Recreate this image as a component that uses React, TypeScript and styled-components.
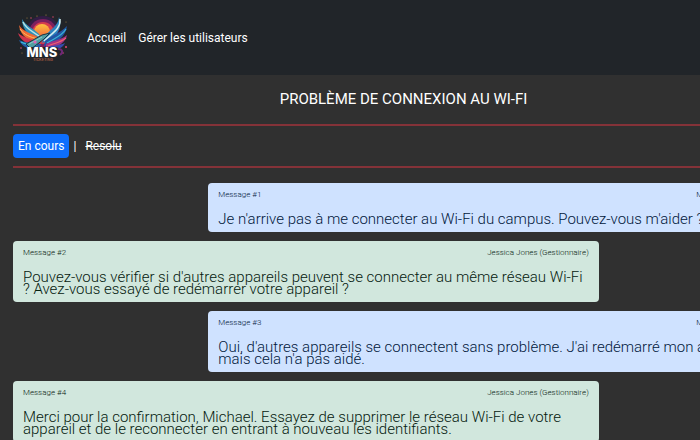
import React from "react";
import styled, { createGlobalStyle, css } from "styled-components";

const GlobalStyle = createGlobalStyle`
  *, *::before, *::after { box-sizing: border-box; }
  html { overflow: hidden; background: #303030; }
  body {
    margin: 0;
    background: #303030;
    color: #fff;
    font-family: Roboto, "Liberation Sans", sans-serif;
    font-size: 12px;
    line-height: 20px;
  }
`;

const Page = styled.div`
  min-width: 807px;
`;

const NavBar = styled.nav`
  display: flex;
  align-items: center;
  gap: 14px;
  height: 75px;
  padding: 0 13px;
  background: #212529;
`;

const LogoLink = styled.a`
  display: block;
  width: 60px;
  height: 60px;
`;

const NavLinks = styled.ul`
  display: flex;
  gap: 12px;
  margin: 0;
  padding: 0;
  list-style: none;
`;

const NavLink = styled.a`
  color: #fff;
  text-decoration: none;
`;

const Main = styled.main`
  padding: 14px 13px;
`;

const Title = styled.h1`
  margin: 0 0 15px;
  font-size: 15px;
  font-weight: 400;
  line-height: 20px;
  text-align: center;
  text-transform: uppercase;
`;

const StatusBar = styled.div`
  display: flex;
  align-items: center;
  gap: 4px;
  padding: 8px 0;
  border: solid #843238;
  border-width: 2px 0;
`;

const StatusButton = styled.button<{ $active?: boolean }>`
  padding: 2px 5px;
  border: 0;
  border-radius: 4px;
  background: transparent;
  color: #fff;
  font: inherit;
  text-decoration: line-through;
  cursor: pointer;
  ${({ $active }) =>
    $active &&
    css`
      background: #0d6efd;
      text-decoration: none;
    `}
`;

const Thread = styled.section`
  display: flex;
  flex-direction: column;
  gap: 9px;
  margin-top: 15px;
`;

const Card = styled.article<{ $own?: boolean }>`
  width: 75%;
  align-self: ${({ $own }) => ($own ? "flex-end" : "flex-start")};
  padding: 7px 10px;
  border-radius: 4px;
  background: ${({ $own }) => ($own ? "#cfe2ff" : "#d1e7dd")};
  color: ${({ $own }) => ($own ? "#02183c" : "#05200f")};
`;

const CardHeader = styled.header`
  display: flex;
  justify-content: space-between;
  margin-bottom: 13px;
  font-size: 8px;
  font-weight: 300;
  line-height: 10px;
`;

const CardText = styled.p`
  margin: 0;
  font-size: 15px;
  font-weight: 300;
  line-height: 12px;
`;

function Logo() {
  return (
    <svg viewBox="0 0 60 60" width="60" height="60" role="img" aria-label="MNS Ticketing">
      <defs>
        <linearGradient id="sun" x2="0" y2="1">
          <stop stopColor="#ffc23f" />
          <stop offset="1" stopColor="#f2543c" />
        </linearGradient>
      </defs>
      <circle cx="30" cy="25" r="17" fill="#321d45" />
      <circle cx="30" cy="25" r="14" fill="#7d205f" />
      <circle cx="30" cy="25" r="11" fill="#d63c4e" />
      <circle cx="29" cy="24" r="8" fill="url(#sun)" />

      <path d="M28 32C18 30 9 23 9 11C13 18 20 20 26 26Z" fill="#2f8fb8" />
      <path d="M10 14C13 21 19 23 26 28" fill="none" stroke="#b9e5e4" strokeWidth="1.4" />
      <path d="M28 36C17 35 7 28 6 17C10 24 18 25 27 30Z" fill="#ef6a35" />
      <path d="M7 21C11 27 17 29 25 31" fill="none" stroke="#ffc05d" strokeWidth="1" />
      <path d="M27 38C16 39 7 32 5 25C11 30 18 31 28 34Z" fill="#cf344d" />
      <path d="M26 41C17 43 8 38 6 32C12 35 19 35 28 36Z" fill="#245ca8" />
      <path d="M8 34C13 37 18 37 24 37" fill="none" stroke="#3ec2d3" strokeWidth="1.2" />

      <path d="M29 35C40 32 51 23 46 9C45 19 37 21 31 29Z" fill="#2c82bf" />
      <path d="M47 11C48 21 39 25 31 33" fill="none" stroke="#d4eef0" strokeWidth="1.5" />
      <path d="M31 38C44 36 53 28 54 18C48 25 40 26 32 33Z" fill="#2255a5" />
      <path d="M53 21C49 28 42 30 34 35" fill="none" stroke="#39b4d4" strokeWidth="1.2" />
      <path d="M33 40C44 41 53 34 54 27C48 32 41 32 33 36Z" fill="#a13385" />
      <path d="M53 30C47 35 41 35 35 38" fill="none" stroke="#ef5f6f" strokeWidth="1.2" />
      <path d="M35 42C43 43 50 40 52 35C46 38 40 37 34 39Z" fill="#344dae" />

      <path d="M13 36L29 27L37 25L31 31L18 41Z" fill="#519ea3" stroke="#183542" strokeWidth="1" />
      <path d="M16 36L29 29" stroke="#9fd8cd" strokeWidth="0.8" />
      <circle cx="22" cy="34" r="1.6" fill="#df62b6" />

      <g fill="#e54b70">
        <circle cx="8" cy="40" r="0.8" />
        <circle cx="53" cy="39" r="1" />
        <circle cx="18" cy="10" r="0.7" />
        <circle cx="40" cy="9" r="0.7" />
        <circle cx="50" cy="45" r="0.8" />
      </g>
      <g fill="#b28b4a">
        <circle cx="24" cy="8" r="0.6" />
        <circle cx="33" cy="7" r="0.6" />
        <circle cx="14" cy="10" r="0.5" />
        <circle cx="53" cy="14" r="0.5" />
        <circle cx="9" cy="45" r="0.5" />
      </g>
      <path d="M13 40L18 39H43L46 40V49H13Z" fill="#212529" />
      <path d="M45 41C49 41 51 44 47 47" fill="none" stroke="#6f2877" strokeWidth="2" />
      <text x="29" y="49" textAnchor="middle" fill="#fff" fontFamily="Inter, sans-serif" fontSize="13" fontWeight="800">
        MNS
      </text>
      <text x="30" y="53" textAnchor="middle" fill="#a35b42" fontFamily="Roboto, sans-serif" fontSize="4" fontWeight="500">
        TICKETING
      </text>
    </svg>
  );
}

const messages = [
  { id: 1, own: true, author: "Michael Smith (Stagiaire)", text: "Je n'arrive pas à me connecter au Wi-Fi du campus. Pouvez-vous m'aider ?" },
  { id: 2, own: false, author: "Jessica Jones (Gestionnaire)", text: "Pouvez-vous vérifier si d'autres appareils peuvent se connecter au même réseau Wi-Fi ? Avez-vous essayé de redémarrer votre appareil ?" },
  { id: 3, own: true, author: "Michael Smith (Stagiaire)", text: "Oui, d'autres appareils se connectent sans problème. J'ai redémarré mon appareil, mais cela n'a pas aidé." },
  { id: 4, own: false, author: "Jessica Jones (Gestionnaire)", text: "Merci pour la confirmation, Michael. Essayez de supprimer le réseau Wi-Fi de votre appareil et de le reconnecter en entrant à nouveau les identifiants." },
];

export default function App() {
  return (
    <Page>
      <GlobalStyle />
      <NavBar>
        <LogoLink href="#"><Logo /></LogoLink>
        <NavLinks>
          <li><NavLink href="#">Accueil</NavLink></li>
          <li><NavLink href="#utilisateurs">Gérer les utilisateurs</NavLink></li>
        </NavLinks>
      </NavBar>
      <Main>
        <Title>Problème de connexion au Wi-Fi</Title>
        <StatusBar>
          <StatusButton type="button" $active>En cours</StatusButton>
          <span>|</span>
          <StatusButton type="button">Resolu</StatusButton>
        </StatusBar>
        <Thread>
          {messages.map((m) => (
            <Card key={m.id} $own={m.own}>
              <CardHeader>
                <span>Message #{m.id}</span>
                <span>{m.author}</span>
              </CardHeader>
              <CardText>{m.text}</CardText>
            </Card>
          ))}
        </Thread>
      </Main>
    </Page>
  );
}
